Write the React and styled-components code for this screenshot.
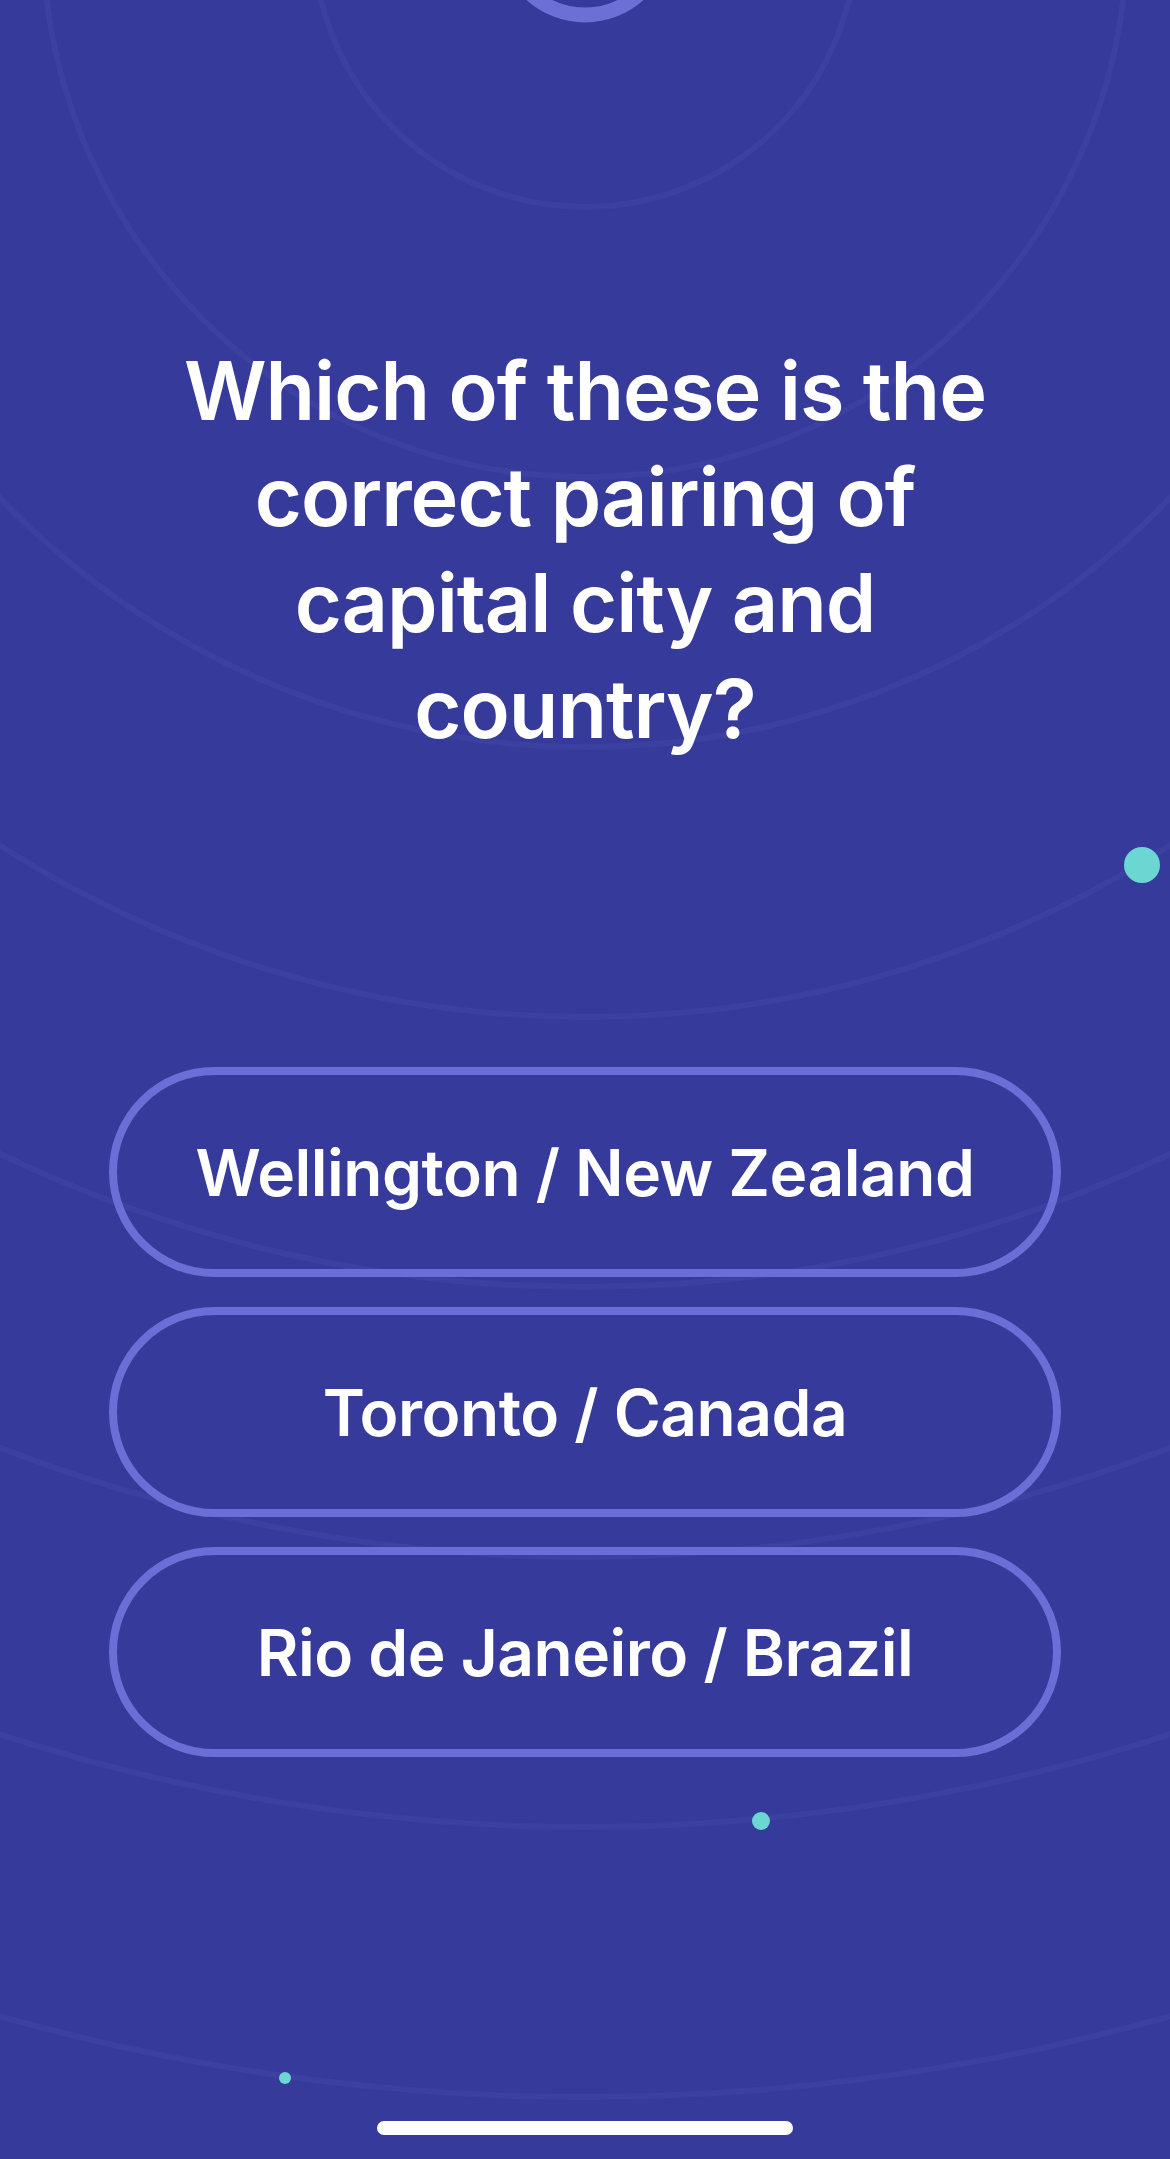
import React from 'react'
import styled, { createGlobalStyle } from 'styled-components'

const GlobalStyle = createGlobalStyle`
    html, body {
        margin: 0;
        padding: 0;
        background: #363A9A;
    }
    * {
        box-sizing: border-box;
    }
`;

const Screen = styled.div`
    position: relative;
    width: 1170px;
    min-height: 2159px;
    overflow: hidden;
    background: #363A9A;
    display: flex;
    flex-direction: column;
    align-items: center;
    font-family: Inter, "Noto Sans", sans-serif;
    color: #fff;
`;

const Backdrop = styled.svg`
    position: absolute;
    inset: 0;
    width: 1170px;
    height: 2159px;
    pointer-events: none;
`;

const Question = styled.h1`
    position: relative;
    margin: 338px 0 0;
    font-size: 81px;
    line-height: 106px;
    font-weight: 600;
    letter-spacing: -1px;
    text-align: center;
`;

const Answers = styled.div`
    position: relative;
    margin-top: 305px;
    display: flex;
    flex-direction: column;
    gap: 30px;
    width: 952px;
`;

const AnswerButton = styled.button`
    height: 210px;
    border: 8px solid #6A6ED6;
    border-radius: 105px;
    background: transparent;
    color: #fff;
    font-family: Inter, "Noto Sans", sans-serif;
    font-size: 64px;
    font-weight: 600;
    letter-spacing: -0.5px;
    cursor: pointer;
`;

const HomeBar = styled.div`
    position: relative;
    margin-top: auto;
    margin-bottom: 24px;
    width: 416px;
    height: 14px;
    border-radius: 7px;
    background: #fff;
`;

const rings = [272, 542, 812, 1082, 1352, 1622, 1892, 2162];

const dots = [
    { x: 1142, y: 865, r: 18 },
    { x: 761, y: 1821, r: 9 },
    { x: 285, y: 2078, r: 6 },
];

const answers = [
    'Wellington / New Zealand',
    'Toronto / Canada',
    'Rio de Janeiro / Brazil',
];

const App = () => {
    return (
        <>
            <GlobalStyle />
            <Screen>
                <Backdrop viewBox="0 0 1170 2159">
                    {rings.map((r) => (
                        <circle key={r} cx="585" cy="-65" r={r} fill="none" stroke="#3C40A1" strokeWidth="6" />
                    ))}
                    <circle cx="585" cy="-65" r="80" fill="none" stroke="#6B6FD6" strokeWidth="15" />
                    {dots.map((d, i) => (
                        <circle key={i} cx={d.x} cy={d.y} r={d.r} fill="#6CD6D3" />
                    ))}
                </Backdrop>
                <Question>
                    Which of these is the<br />
                    correct pairing of<br />
                    capital city and<br />
                    country?
                </Question>
                <Answers>
                    {answers.map((a) => (
                        <AnswerButton key={a}>{a}</AnswerButton>
                    ))}
                </Answers>
                <HomeBar />
            </Screen>
        </>
    )
}

export default App
